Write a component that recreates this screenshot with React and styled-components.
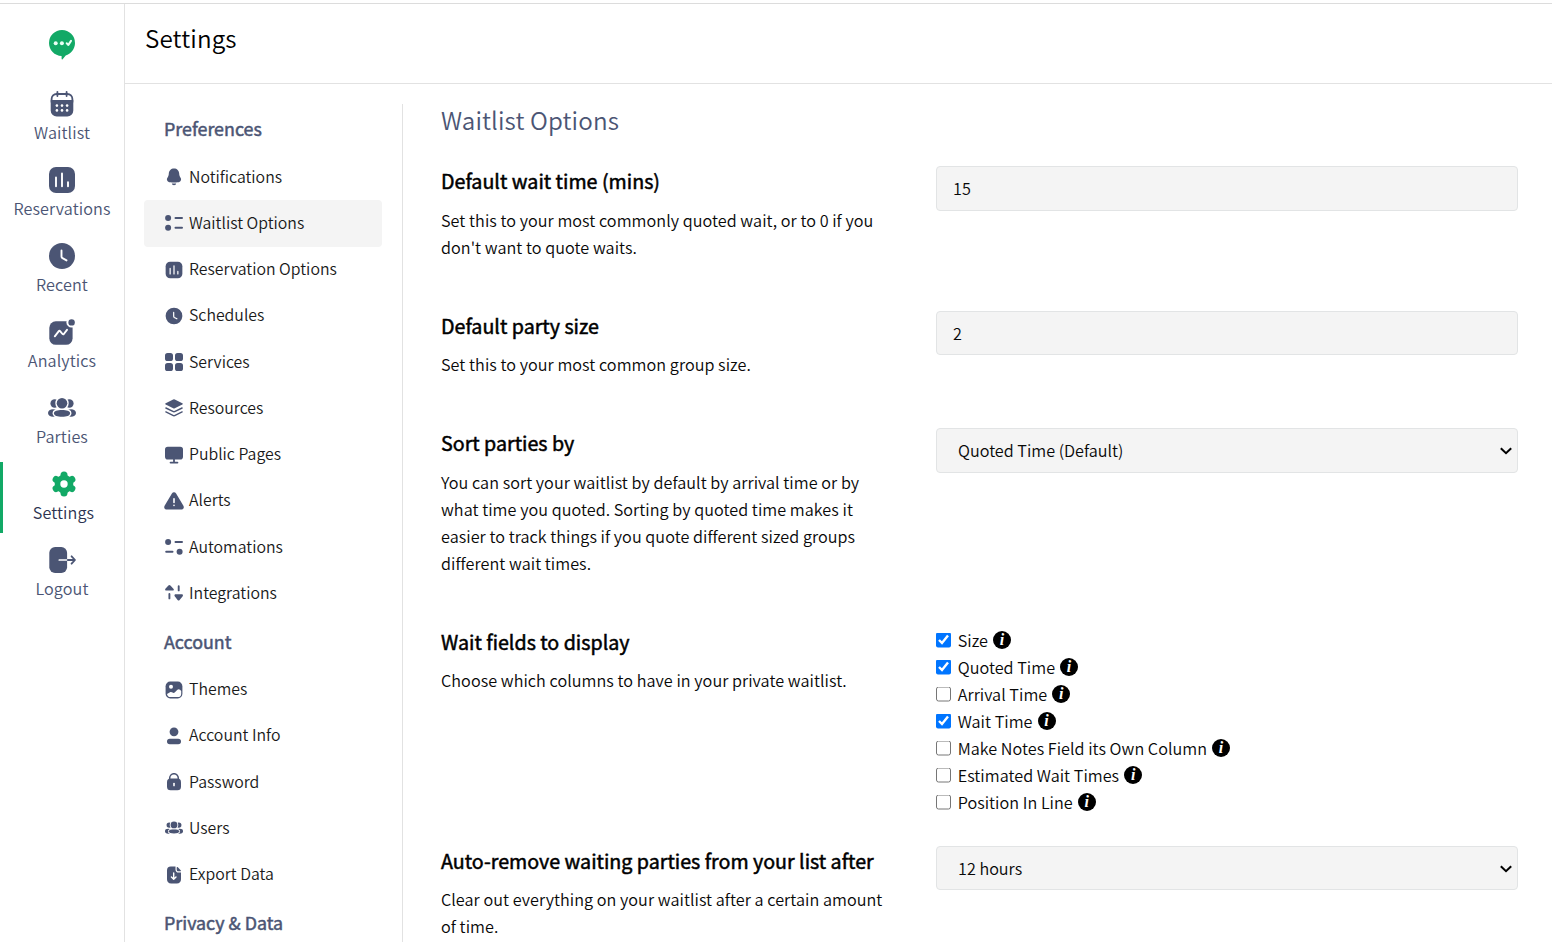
import React from "react";
import styled, { createGlobalStyle, css } from "styled-components";

const INK = "#4b5574";
const GREEN = "#12a966";

const GlobalStyle = createGlobalStyle`
  *, *::before, *::after { box-sizing: border-box; }
  body { margin: 0; background: #fff; overflow: hidden; }
  body, input, select {
    font-family: "Noto Sans CJK SC", "Noto Sans", sans-serif;
    font-size: 16.2px;
    font-weight: 350;
    color: #080808;
  }
  h1, h2, h3, p, ul { margin: 0; padding: 0; }
`;

const Page = styled.div`
  display: flex;
  height: 942px;
  padding-top: 3px;
  overflow: hidden;
`;

const Frame = styled.div`
  display: flex;
  flex: 1;
  min-width: 0;
  border-top: 1px solid #dcdcdc;
`;

const Sidebar = styled.nav`
  display: flex;
  flex-direction: column;
  flex: none;
  width: 125px;
  border-right: 1px solid #e2e2e2;
`;

const Brand = styled.div`
  display: flex;
  justify-content: center;
  height: 78px;
  padding-top: 25px;
`;

const SideLink = styled.a`
  display: flex;
  flex-direction: column;
  align-items: center;
  height: 71px;
  margin-bottom: 5px;
  padding-top: 8px;
  font-size: 16.2px;
  line-height: 27px;
  letter-spacing: 0.1px;
  color: ${(p) => (p.$active ? "#2c3350" : INK)};
  border-left: ${(p) => (p.$active ? `3px solid ${GREEN}` : "none")};

  svg { margin-bottom: 1px; }
`;

const Content = styled.div`
  display: flex;
  flex-direction: column;
  flex: 1;
  min-width: 0;
`;

const Header = styled.header`
  height: 80px;
  padding: 15px 20px 0 20px;
  border-bottom: 1px solid #e2e2e2;
`;

const PageTitle = styled.h1`
  font-size: 24.2px;
  line-height: 38px;
  font-weight: 350;
  letter-spacing: 0.15px;
  color: #000;
`;

const Body = styled.div`
  display: flex;
  flex: 1;
  min-height: 0;
  padding: 20px 34px 0 19px;
`;

const Menu = styled.aside`
  flex: none;
  width: 259px;
  padding-right: 20px;
  border-right: 1px solid #e2e2e2;
`;

const MenuHeading = styled.h2`
  height: 50px;
  padding-left: 20px;
  font-size: 17.85px;
  font-weight: 400;
  line-height: 48px;
  color: ${INK};
  -webkit-text-stroke: 0.5px ${INK};
`;

const MenuItem = styled.a`
  display: flex;
  align-items: center;
  gap: 5px;
  height: 46.25px;
  padding: 0 0 1px 20px;
  border-radius: 4px;
  font-size: 15.85px;
  color: #1a1a1a;
  white-space: nowrap;
  ${(p) => p.$active && css`background: #f4f4f4;`}

  svg { flex: none; }
`;

const MenuLabel = styled.span`
  padding-bottom: 1px;
`;

const Main = styled.main`
  flex: 1;
  min-width: 0;
  padding-left: 38px;
`;

const SectionTitle = styled.h2`
  height: 62.3px;
  font-size: 24.2px;
  font-weight: 350;
  line-height: 32px;
  letter-spacing: 0.13px;
  color: ${INK};
`;

const Setting = styled.section`
  display: grid;
  grid-template-columns: 445px 582px;
  column-gap: 50px;
  align-items: start;
`;

const SettingText = styled.div`
  padding-bottom: 50.2px;
`;

const SettingName = styled.h3`
  height: 40.3px;
  font-size: 19.67px;
  font-weight: 400;
  line-height: 30px;
  color: #000;
  -webkit-text-stroke: 0.5px #000;
`;

const Description = styled.p`
  line-height: 27px;
  white-space: pre-line;
  letter-spacing: 0.045px;
`;

const fieldBox = css`
  display: block;
  width: 100%;
  height: 44.5px;
  border: 1px solid #e2e4e5;
  border-radius: 4px;
  background-color: #f4f4f4;
  outline: none;
`;

const TextField = styled.input`
  ${fieldBox}
  padding: 0 16px 0.5px;
`;

const SelectWrap = styled.div`
  position: relative;

  svg {
    position: absolute;
    top: 18px;
    right: 5px;
    pointer-events: none;
  }
`;

const SelectControl = styled.select`
  ${fieldBox}
  appearance: none;
  padding: 0 30px 0.5px 21px;
`;

const CheckList = styled.ul`
  list-style: none;
  padding-bottom: 30px;
  letter-spacing: 0.03px;
`;

const CheckRow = styled.li`
  display: flex;
  align-items: center;
  height: 27px;
`;

const CheckLabel = styled.label`
  display: flex;
  align-items: center;
`;

const CheckBox = styled.input`
  width: 15px;
  height: 15px;
  margin: 0 6.7px 0 0;
  transform: translateY(-0.5px);
`;

const InfoBadge = styled.span`
  display: flex;
  align-items: center;
  justify-content: center;
  width: 18px;
  height: 18px;
  margin: 0 0 1px 5px;
  border-radius: 50%;
  background: #000;
  color: #fff;
  font: italic 700 16px/18px "Liberation Serif", serif;
`;

const Svg = ({ size = 18, w = size, h = size, vb, children }) => (
  <svg width={w} height={h} viewBox={vb || `0 0 ${w} ${h}`} fill={INK} aria-hidden="true">
    {children}
  </svg>
);
const line = { fill: "none", strokeLinecap: "round", strokeLinejoin: "round" };

const Logo = () => (
  <Svg w={28} h={32}>
    <path fill={GREEN} d="M14 .9a13 13 0 0 1 13 13c0 6.200-4.300 11-9.300 12.500L14.600 30.200c-.5.500-1 .2-1-.4v-2.900C6.500 26.700 1 20.900 1 13.900a13 13 0 0 1 13-13z" />
    <g fill="#e9fff4"><circle cx="7.700" cy="14.200" r="2" /><circle cx="13.900" cy="14.200" r="2" /></g>
    <path {...line} stroke="#e9fff4" strokeWidth="2" d="M18.700 14.300l1.700 1.600 2.600-4" />
  </Svg>
);

const CalendarIcon = () => (
  <Svg size={28}>
    <path {...line} stroke={INK} strokeWidth="1.800" d="M3.600 12V9a5 5 0 0 1 5-5h10.800a5 5 0 0 1 5 5v3" />
    <path {...line} stroke={INK} strokeWidth="1.800" d="M9.400 1.800v4.200M18.600 1.800v4.200" />
    <path d="M2.700 10h22.600v10.500a6 6 0 0 1-6 6H8.700a6 6 0 0 1-6-6z" />
    <g fill="#fff">
      {[8.900, 14, 19.100].map((x) => [15.600, 20.400].map((y) => (
        <circle key={`${x}-${y}`} cx={x} cy={y} r="1.300" />
      )))}
    </g>
  </Svg>
);

const ChartIcon = ({ size = 28, bg = "#fff" }) => (
  <Svg size={size} vb="0 0 28 28">
    <rect x="1" y="1" width="26" height="26" rx="7" />
    <path {...line} stroke={bg} strokeWidth="1.900" d="M8 11.500v8.700M14 7.500v12.700M20 16.300v3.900" />
  </Svg>
);

const ClockIcon = ({ size = 28 }) => (
  <Svg size={size} vb="0 0 28 28">
    <circle cx="14" cy="14" r="13" />
    <path {...line} stroke="#fff" strokeWidth="1.900" d="M13.500 8.400v6.100c0 .8.400 1.300 1 1.700l4 2.200" />
  </Svg>
);

const AnalyticsIcon = () => (
  <Svg size={28}>
    <rect x="1.300" y="3.300" width="23.300" height="23.500" rx="6.500" />
    <circle cx="23.600" cy="4.400" r="5.200" fill="#fff" />
    <circle cx="23.600" cy="4.400" r="3.200" />
    <path {...line} stroke="#fff" strokeWidth="1.900" d="M6.800 18.300l4-5.200c.4-.5 1-.5 1.300 0l2.400 2.900c.4.500 1 .5 1.300 0l3.200-4.200" />
  </Svg>
);

const PeopleIcon = ({ size = 28 }) => (
  <Svg size={size} vb="0 0 28 28">
    <circle cx="6.600" cy="9.500" r="4.200" /><circle cx="21.400" cy="9.500" r="4.200" />
    <ellipse cx="5" cy="19" rx="5" ry="3.800" /><ellipse cx="23" cy="19" rx="5" ry="3.800" />
    <g stroke="#fff" strokeWidth="2.800" paintOrder="stroke">
      <path d="M14 16c4.600 0 8.100 1.200 8.100 3.200 0 2.500-3.500 3.500-8.100 3.500s-8.100-1-8.100-3.500c0-2 3.500-3.200 8.100-3.200z" />
      <circle cx="14" cy="9.200" r="5.300" />
    </g>
  </Svg>
);

const GearIcon = () => (
  <Svg w={28} h={28}>
    <g stroke={GREEN} strokeWidth="7" strokeLinecap="round">
      {[0, 60, 120].map((a) => (
        <path key={a} d="M14 4.900v18.200" transform={`rotate(${a} 14 14)`} />
      ))}
    </g>
    <circle cx="14" cy="14" r="9.300" fill={GREEN} />
    <circle cx="14" cy="14" r="3.700" fill="#fff" />
  </Svg>
);

const LogoutIcon = () => (
  <Svg size={28}>
    <rect x="1.300" y="1" width="17.800" height="26" rx="5.800" />
    <path {...line} stroke="#fff" strokeWidth="1.700" d="M11.300 14h7.800" />
    <path {...line} stroke={INK} strokeWidth="1.800" d="M19.800 14h7M23.600 10.300l3.400 3.700-3.400 3.700" />
  </Svg>
);

const BellIcon = () => (
  <Svg>
    <path d="M9 .6c3 0 5 2.100 5.200 5 .1 1.700.3 2.700 1.200 3.800.7.900.9 2 .4 3-.5 1.100-1.500 1.800-3 1.900-2.500.3-5.100.3-7.600 0-1.500-.1-2.500-.8-3-1.900-.5-1-.3-2.100.4-3 .9-1.100 1.100-2.100 1.200-3.800C4 2.700 6 .6 9 .6z" />
    <path d="M6.900 15.500h4.200c0 1-.9 1.700-2.100 1.700s-2.100-.7-2.100-1.700z" />
  </Svg>
);

const ListIcon = () => (
  <Svg>
    <circle cx="3.100" cy="4.100" r="3" /><circle cx="3.100" cy="13.800" r="3" />
    <path {...line} stroke={INK} strokeWidth="2" d="M10.500 4.100H17M10.500 13.800H17" />
  </Svg>
);

const GridIcon = () => (
  <Svg>
    {[0, 10].map((x) => [0, 10].map((y) => (
      <rect key={`${x}-${y}`} x={x} y={y} width="8" height="8" rx="2.600" />
    )))}
  </Svg>
);

const LayersIcon = () => (
  <Svg>
    <path d="M8.200.4a2 2 0 0 1 1.600 0l7.500 3.900c.7.400.7.900 0 1.300L9.800 9.300a2 2 0 0 1-1.600 0L.7 5.600C0 5.200 0 4.700.7 4.300z" />
    <path {...line} stroke={INK} strokeWidth="1.400" d="M.9 9l7.500 3.600q.6.200 1.200 0L17.100 9M.9 12.900l7.500 3.700q.6.200 1.200 0l7.500-3.700" />
  </Svg>
);

const MonitorIcon = () => (
  <Svg>
    <rect x="0" y=".8" width="18" height="12.800" rx="2.800" />
    <path d="M8.100 13h1.800v3H8.100z" />
    <path {...line} stroke={INK} strokeWidth="1.700" d="M5.500 16.600h7" />
  </Svg>
);

const AlertIcon = () => (
  <Svg w={20} h={18}>
    <path d="M7.900 1.500c1-1.700 3.200-1.700 4.200 0l7.300 12.300c1 1.800 0 3.700-2 3.700H2.600c-2 0-3-1.900-2-3.700z" />
    <path {...line} stroke="#fff" strokeWidth="1.600" d="M10 6.800v3.700M10 13.300v.1" />
  </Svg>
);

const ToggleIcon = () => (
  <Svg>
    <circle cx="3.100" cy="4" r="3" /><circle cx="14.600" cy="13.800" r="3" />
    <path {...line} stroke={INK} strokeWidth="2" d="M10.500 4H17M1.200 13.800h6.300" />
  </Svg>
);

const SwapIcon = () => (
  <Svg>
    <path d="M3.400 1.500q1-1 2 0l3 3.300q1 1.200-.2 1.800H.8Q-.3 6 .4 4.800zM12.600 15.900q1 1 2 0l2.900-3.300q1-1.200-.2-2.300h-7.200q-1.200 1-.2 2.300z" />
    <path {...line} stroke={INK} strokeWidth="1.900" d="M4.400 10v4.400M13.700 2.300v4.100" />
  </Svg>
);

const ImageIcon = () => (
  <Svg>
    <rect x=".6" y=".6" width="16.800" height="16.800" rx="4.600" />
    <circle cx="6" cy="5.800" r="2" fill="#fff" />
    <path fill="#fff" d="M2 13l3-1.700c.9-.5 1.700-.3 2.500.2.900.6 1.700.5 2.400-.2l2.500-2.500c.8-.8 1.800-.8 2.600 0l1.200 1.200v2.700c0 2.200-1.200 3.400-3.400 3.400H5.300C3.600 16.100 2.300 15 2 13z" />
  </Svg>
);

const PersonIcon = () => (
  <Svg>
    <circle cx="9" cy="4.800" r="4.400" />
    <rect x="2" y="11.700" width="14" height="5.600" rx="2.800" />
  </Svg>
);

const LockIcon = () => (
  <Svg>
    <path {...line} stroke={INK} strokeWidth="1.500" d="M4.700 7V5a4.300 4.300 0 0 1 8.600 0v2" />
    <rect x="2" y="5.600" width="14" height="11.700" rx="3.600" />
    <rect x="8.200" y="9.800" width="1.600" height="3.600" rx=".8" fill="#fff" />
  </Svg>
);

const FileIcon = () => (
  <Svg>
    <path d="M5.800.6h4.700v2.800c0 2 1.200 3.200 3.100 3.200H16v6.600c0 2.700-1.500 4.200-4.200 4.200H6.200C3.500 17.400 2 15.900 2 13.200V4.600C2 2 3.300.6 5.800.6z" />
    <path d="M11.700 1.500c0-.6.500-.8.900-.4l3.100 3.200c.4.500.2 1-.4 1h-1.700c-1.200 0-1.900-.7-1.900-1.900z" />
    <path {...line} stroke="#fff" strokeWidth="1.400" d="M8.700 7v6M6.400 10.900l2.300 2.300 2.300-2.300" />
  </Svg>
);

const sideLinks = [
  ["Waitlist", CalendarIcon],
  ["Reservations", ChartIcon],
  ["Recent", ClockIcon],
  ["Analytics", AnalyticsIcon],
  ["Parties", PeopleIcon],
  ["Settings", GearIcon],
  ["Logout", LogoutIcon],
];

const IconSlot = styled.span`
  display: flex;
  justify-content: center;
  flex: none;
  width: 20px;
  padding-top: 1px;
`;

const menu = [
  ["Preferences", [
    ["Notifications", <BellIcon />],
    ["Waitlist Options", <ListIcon />],
    ["Reservation Options", <ChartIcon size={18} />],
    ["Schedules", <ClockIcon size={18} />],
    ["Services", <GridIcon />],
    ["Resources", <LayersIcon />],
    ["Public Pages", <MonitorIcon />],
    ["Alerts", <AlertIcon />],
    ["Automations", <ToggleIcon />],
    ["Integrations", <SwapIcon />],
  ]],
  ["Account", [
    ["Themes", <ImageIcon />],
    ["Account Info", <PersonIcon />],
    ["Password", <LockIcon />],
    ["Users", <PeopleIcon size={18} />],
    ["Export Data", <FileIcon />],
  ]],
  ["Privacy & Data", []],
];

const waitFields = [
  ["Size", true],
  ["Quoted Time", true],
  ["Arrival Time", false],
  ["Wait Time", true],
  ["Make Notes Field its Own Column", false],
  ["Estimated Wait Times", false],
  ["Position In Line", false],
];

const SelectField = ({ value }) => (
  <SelectWrap>
    <SelectControl><option>{value}</option></SelectControl>
    <svg width="14" height="10" viewBox="0 0 14 10">
      <path fill="none" stroke="#000" strokeWidth="2" d="M1.800 2.200L7 7.200l5.200-5" />
    </svg>
  </SelectWrap>
);

const SettingRow = ({ name, text, children }) => (
  <Setting>
    <SettingText>
      <SettingName>{name}</SettingName>
      <Description>{text}</Description>
    </SettingText>
    {children}
  </Setting>
);

export default function App() {
  return (
    <>
      <GlobalStyle />
      <Page>
        <Frame>
          <Sidebar>
            <Brand><Logo /></Brand>
            {sideLinks.map(([label, Icon]) => (
              <SideLink key={label} $active={label === "Settings"}>
                <Icon />
                {label}
              </SideLink>
            ))}
          </Sidebar>
          <Content>
            <Header><PageTitle>Settings</PageTitle></Header>
            <Body>
              <Menu>
                {menu.map(([heading, items]) => (
                  <React.Fragment key={heading}>
                    <MenuHeading>{heading}</MenuHeading>
                    {items.map(([label, icon]) => (
                      <MenuItem key={label} $active={label === "Waitlist Options"}>
                        <IconSlot>{icon}</IconSlot>
                        <MenuLabel>{label}</MenuLabel>
                      </MenuItem>
                    ))}
                  </React.Fragment>
                ))}
              </Menu>
              <Main>
                <SectionTitle>Waitlist Options</SectionTitle>
                <SettingRow
                  name="Default wait time (mins)"
                  text={"Set this to your most commonly quoted wait, or to 0 if you\ndon't want to quote waits."}
                >
                  <TextField defaultValue="15" />
                </SettingRow>
                <SettingRow name="Default party size" text="Set this to your most common group size.">
                  <TextField defaultValue="2" />
                </SettingRow>
                <SettingRow
                  name="Sort parties by"
                  text={"You can sort your waitlist by default by arrival time or by\nwhat time you quoted. Sorting by quoted time makes it\neasier to track things if you quote different sized groups\ndifferent wait times."}
                >
                  <SelectField value="Quoted Time (Default)" />
                </SettingRow>
                <SettingRow name="Wait fields to display" text="Choose which columns to have in your private waitlist.">
                  <CheckList>
                    {waitFields.map(([label, checked]) => (
                      <CheckRow key={label}>
                        <CheckLabel>
                          <CheckBox type="checkbox" defaultChecked={checked} />
                          {label}
                        </CheckLabel>
                        <InfoBadge>i</InfoBadge>
                      </CheckRow>
                    ))}
                  </CheckList>
                </SettingRow>
                <SettingRow
                  name="Auto-remove waiting parties from your list after"
                  text={"Clear out everything on your waitlist after a certain amount\nof time."}
                >
                  <SelectField value="12 hours" />
                </SettingRow>
              </Main>
            </Body>
          </Content>
        </Frame>
      </Page>
    </>
  );
}
